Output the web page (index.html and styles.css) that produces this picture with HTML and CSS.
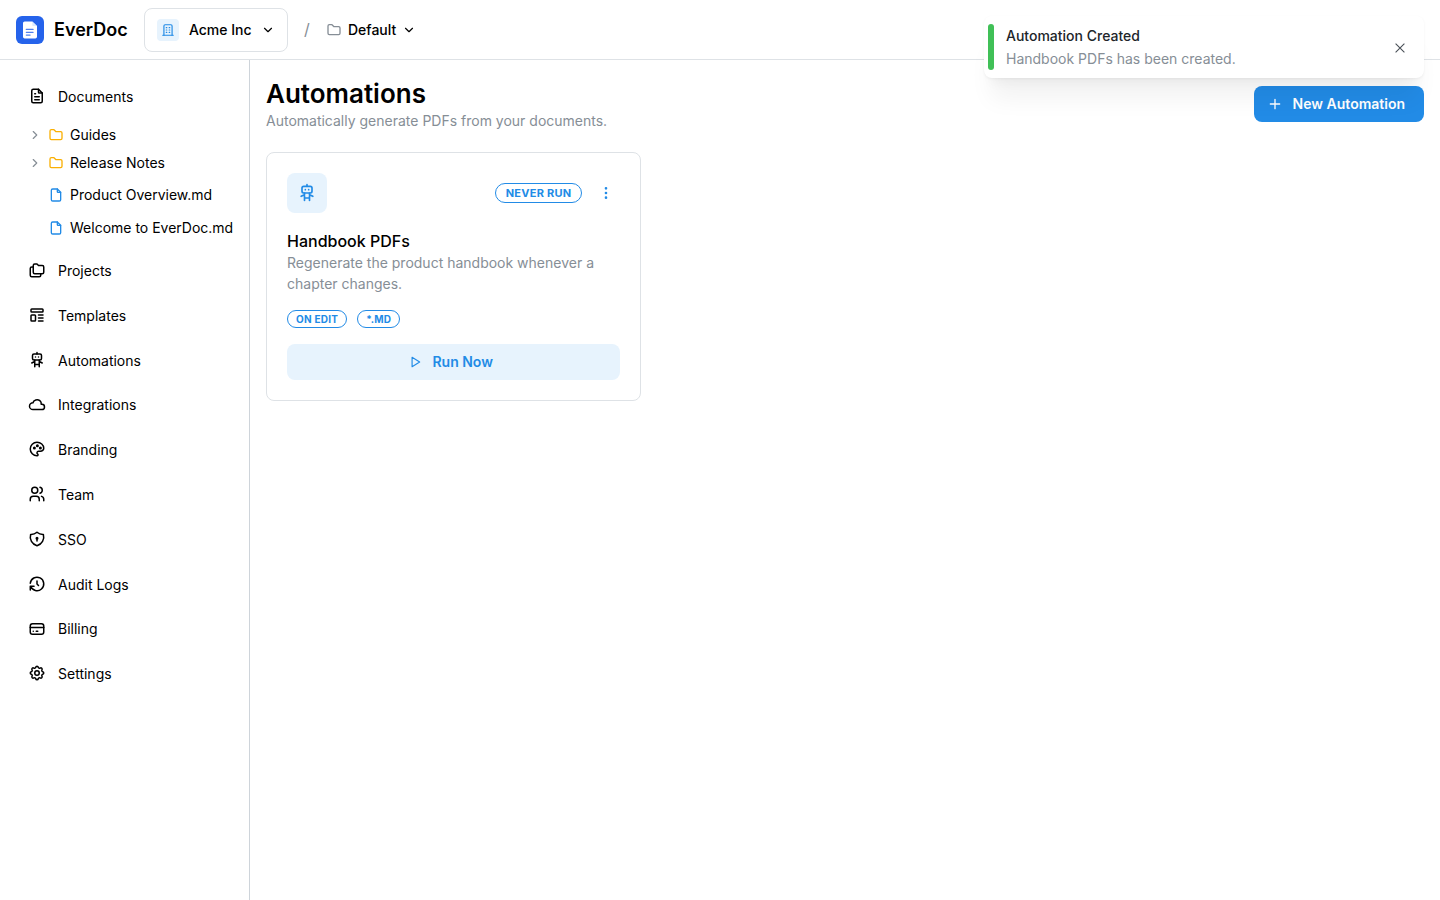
FILE: index.html
```html
<!DOCTYPE html>
<html lang="en">
<head>
<meta charset="utf-8">
<title>EverDoc</title>
<link rel="stylesheet" href="styles.css">
</head>
<body>
<svg class="defs" width="0" height="0">
  <symbol id="file-text" viewBox="0 0 24 24"><path d="M14 3v4a1 1 0 0 0 1 1h4"/><path d="M17 21h-10a2 2 0 0 1 -2 -2v-14a2 2 0 0 1 2 -2h7l5 5v11a2 2 0 0 1 -2 2z"/><path d="M9 9l1 0M9 13l6 0M9 17l6 0"/></symbol>
  <symbol id="file" viewBox="0 0 24 24"><path d="M14 3v4a1 1 0 0 0 1 1h4"/><path d="M17 21h-10a2 2 0 0 1 -2 -2v-14a2 2 0 0 1 2 -2h7l5 5v11a2 2 0 0 1 -2 2z"/></symbol>
  <symbol id="folder" viewBox="0 0 24 24"><path d="M5 4h4l3 3h7a2 2 0 0 1 2 2v8a2 2 0 0 1 -2 2h-14a2 2 0 0 1 -2 -2v-11a2 2 0 0 1 2 -2"/></symbol>
  <symbol id="folders" viewBox="0 0 24 24"><path d="M9 4h3l2 2h5a2 2 0 0 1 2 2v7a2 2 0 0 1 -2 2h-10a2 2 0 0 1 -2 -2v-9a2 2 0 0 1 2 -2"/><path d="M17 17v2a2 2 0 0 1 -2 2h-10a2 2 0 0 1 -2 -2v-9a2 2 0 0 1 2 -2h2"/></symbol>
  <symbol id="template" viewBox="0 0 24 24"><path d="M4 5a1 1 0 0 1 1 -1h14a1 1 0 0 1 1 1v2a1 1 0 0 1 -1 1h-14a1 1 0 0 1 -1 -1z"/><path d="M4 13a1 1 0 0 1 1 -1h4a1 1 0 0 1 1 1v6a1 1 0 0 1 -1 1h-4a1 1 0 0 1 -1 -1z"/><path d="M14 12l6 0M14 16l6 0M14 20l6 0"/></symbol>
  <symbol id="robot" viewBox="0 0 24 24"><path d="M6 6a2 2 0 0 1 2 -2h8a2 2 0 0 1 2 2v4a2 2 0 0 1 -2 2h-8a2 2 0 0 1 -2 -2z"/><path d="M12 2v2M9 12v9M15 12v9M5 16l4 -2M15 14l4 2M9 18h6M10 8v.01M14 8v.01"/></symbol>
  <symbol id="cloud" viewBox="0 0 24 24"><path d="M6.657 18c-2.572 0 -4.657 -2.007 -4.657 -4.483c0 -2.475 2.085 -4.482 4.657 -4.482c.393 -1.762 1.794 -3.2 3.675 -3.773c1.88 -.572 3.956 -.193 5.444 1c1.488 1.19 2.162 3.007 1.77 4.769h.99c1.913 0 3.464 1.56 3.464 3.486c0 1.927 -1.551 3.487 -3.465 3.487h-11.878"/></symbol>
  <symbol id="palette" viewBox="0 0 24 24"><path d="M12 21a9 9 0 0 1 0 -18c4.97 0 9 3.582 9 8c0 1.06 -.474 2.078 -1.318 2.828c-.844 .75 -1.989 1.172 -3.182 1.172h-2.5a2 2 0 0 0 -1 3.75a1.3 1.3 0 0 1 -1 2.25"/><circle cx="8.5" cy="10.5" r="1"/><circle cx="12.5" cy="7.5" r="1"/><circle cx="16.5" cy="10.5" r="1"/></symbol>
  <symbol id="users" viewBox="0 0 24 24"><circle cx="9" cy="7" r="4"/><path d="M3 21v-2a4 4 0 0 1 4 -4h4a4 4 0 0 1 4 4v2"/><path d="M16 3.13a4 4 0 0 1 0 7.75"/><path d="M21 21v-2a4 4 0 0 0 -3 -3.85"/></symbol>
  <symbol id="shield" viewBox="0 0 24 24"><path d="M12 3a12 12 0 0 0 8.5 3a12 12 0 0 1 -8.5 15a12 12 0 0 1 -8.5 -15a12 12 0 0 0 8.5 -3"/><circle cx="12" cy="11" r="1"/><path d="M12 12l0 2.5"/></symbol>
  <symbol id="history" viewBox="0 0 24 24"><path d="M12 8l0 4l2 2"/><path d="M3.05 11a9 9 0 1 1 .5 4m-.5 5v-5h5"/></symbol>
  <symbol id="card" viewBox="0 0 24 24"><path d="M3 8a3 3 0 0 1 3 -3h12a3 3 0 0 1 3 3v8a3 3 0 0 1 -3 3h-12a3 3 0 0 1 -3 -3z"/><path d="M3 10l18 0M7 15l.01 0M11 15l2 0"/></symbol>
  <symbol id="settings" viewBox="0 0 24 24"><path d="M10.325 4.317c.426 -1.756 2.924 -1.756 3.35 0a1.724 1.724 0 0 0 2.573 1.066c1.543 -.94 3.31 .826 2.37 2.37a1.724 1.724 0 0 0 1.065 2.572c1.756 .426 1.756 2.924 0 3.35a1.724 1.724 0 0 0 -1.066 2.573c.94 1.543 -.826 3.31 -2.37 2.37a1.724 1.724 0 0 0 -2.572 1.065c-.426 1.756 -2.924 1.756 -3.35 0a1.724 1.724 0 0 0 -2.573 -1.066c-1.543 .94 -3.31 -.826 -2.37 -2.37a1.724 1.724 0 0 0 -1.065 -2.572c-1.756 -.426 -1.756 -2.924 0 -3.35a1.724 1.724 0 0 0 1.066 -2.573c-.94 -1.543 .826 -3.31 2.37 -2.37c1 .608 2.296 .07 2.572 -1.065z"/><circle cx="12" cy="12" r="3"/></symbol>
  <symbol id="building" viewBox="0 0 24 24"><path d="M3 21l18 0M9 8l1 0M9 12l1 0M9 16l1 0M14 8l1 0M14 12l1 0M14 16l1 0"/><path d="M5 21v-16a2 2 0 0 1 2 -2h10a2 2 0 0 1 2 2v16"/></symbol>
  <symbol id="chevron-down" viewBox="0 0 24 24"><path d="M6 9l6 6l6 -6"/></symbol>
  <symbol id="chevron-right" viewBox="0 0 24 24"><path d="M9 6l6 6l-6 6"/></symbol>
  <symbol id="plus" viewBox="0 0 24 24"><path d="M12 5l0 14M5 12l14 0"/></symbol>
  <symbol id="play" viewBox="0 0 24 24"><path d="M7 4v16l13 -8z"/></symbol>
  <symbol id="dots" viewBox="0 0 24 24"><circle cx="12" cy="12" r="1"/><circle cx="12" cy="19" r="1"/><circle cx="12" cy="5" r="1"/></symbol>
</svg>

<header class="header">
  <div class="brand">
    <svg class="logo" viewBox="0 0 28 28"><rect width="28" height="28" rx="6" fill="#2563eb"/><path d="M8.7 5.4h7.6l4.7 4.7v10.7a1.7 1.7 0 0 1 -1.7 1.7h-10.6a1.7 1.7 0 0 1 -1.7 -1.7v-13.7a1.7 1.7 0 0 1 1.7 -1.7z" fill="#fff"/><path d="M16.3 5.4l4.7 4.7h-3.5a1.2 1.2 0 0 1 -1.2 -1.2z" fill="#dbeafe"/><path d="M10.3 13.4h6.8M10.3 16.3h6.8M10.3 19.1h3.8" stroke="#4f80ee" stroke-width="1.2" stroke-linecap="round"/></svg>
    <span class="brand-name">EverDoc</span>
  </div>
  <button class="org">
    <span class="org-icon"><svg class="icon s14"><use href="#building"/></svg></span>
    <span class="org-name">Acme Inc</span>
    <svg class="icon s14"><use href="#chevron-down"/></svg>
  </button>
  <span class="slash">/</span>
  <button class="workspace">
    <svg class="icon s16 gray"><use href="#folder"/></svg>
    <span>Default</span>
    <svg class="icon s14"><use href="#chevron-down"/></svg>
  </button>
</header>

<div class="shell">
  <nav class="sidebar">
    <a class="nav"><svg class="icon s18"><use href="#file-text"/></svg>Documents</a>
    <div class="tree">
      <a class="branch"><svg class="icon s14 gray"><use href="#chevron-right"/></svg><svg class="icon s16 yellow"><use href="#folder"/></svg>Guides</a>
      <a class="branch"><svg class="icon s14 gray"><use href="#chevron-right"/></svg><svg class="icon s16 yellow"><use href="#folder"/></svg>Release Notes</a>
      <div class="leaves">
        <a class="leaf"><svg class="icon s16 blue"><use href="#file"/></svg>Product Overview.md</a>
        <a class="leaf"><svg class="icon s16 blue"><use href="#file"/></svg>Welcome to EverDoc.md</a>
      </div>
    </div>
    <a class="nav"><svg class="icon s18"><use href="#folders"/></svg>Projects</a>
    <a class="nav"><svg class="icon s18"><use href="#template"/></svg>Templates</a>
    <a class="nav"><svg class="icon s18"><use href="#robot"/></svg>Automations</a>
    <a class="nav"><svg class="icon s18"><use href="#cloud"/></svg>Integrations</a>
    <a class="nav"><svg class="icon s18"><use href="#palette"/></svg>Branding</a>
    <a class="nav"><svg class="icon s18"><use href="#users"/></svg>Team</a>
    <a class="nav"><svg class="icon s18"><use href="#shield"/></svg>SSO</a>
    <a class="nav"><svg class="icon s18"><use href="#history"/></svg>Audit Logs</a>
    <a class="nav"><svg class="icon s18"><use href="#card"/></svg>Billing</a>
    <a class="nav"><svg class="icon s18"><use href="#settings"/></svg>Settings</a>
  </nav>

  <main class="main">
    <div class="page-head">
      <div>
        <h1 class="title">Automations</h1>
        <p class="subtitle">Automatically generate PDFs from your documents.</p>
      </div>
      <button class="primary"><svg class="icon s16"><use href="#plus"/></svg>New Automation</button>
    </div>
    <section class="card">
      <div class="card-top">
        <span class="card-icon"><svg class="icon s20"><use href="#robot"/></svg></span>
        <span class="badge">Never run</span>
        <button class="more"><svg class="icon s16"><use href="#dots"/></svg></button>
      </div>
      <h2 class="card-title">Handbook PDFs</h2>
      <p class="card-text">Regenerate the product handbook whenever a chapter changes.</p>
      <div class="tags"><span class="badge small">On edit</span><span class="badge small">*.md</span></div>
      <button class="run"><svg class="icon s14"><use href="#play"/></svg>Run Now</button>
    </section>
  </main>
</div>

<div class="toast">
  <span class="toast-bar"></span>
  <div class="toast-body">
    <div class="toast-title">Automation Created</div>
    <div class="toast-text">Handbook PDFs has been created.</div>
  </div>
  <svg class="toast-close" viewBox="0 0 10 10"><path d="M0.6 0.6l8.8 8.8M9.4 0.6l-8.8 8.8"/></svg>
</div>
</body>
</html>
```
FILE: styles.css
```css
* { box-sizing: border-box; }
body {
  margin: 0;
  height: 900px;
  overflow: hidden;
  background: #fff;
  color: #000;
  font-family: Inter, "Liberation Sans", sans-serif;
  font-size: 14px;
  line-height: 21.7px;
  -webkit-font-smoothing: antialiased;
}
button { font: inherit; color: inherit; background: none; border: 0; padding: 0; margin: 0; }
h1, h2, p { margin: 0; }
.defs { position: absolute; }

.icon { flex: none; fill: none; stroke: currentColor; stroke-width: 2; stroke-linecap: round; stroke-linejoin: round; }
.s14 { width: 14px; height: 14px; }
.s16 { width: 16px; height: 16px; }
.s18 { width: 18px; height: 18px; }
.s20 { width: 20px; height: 20px; }
.gray { color: #868e96; }
.yellow { color: #fab005; }
.blue { color: #228be6; }

.header {
  display: flex;
  align-items: center;
  height: 60px;
  padding: 0 16px;
  border-bottom: 1px solid #dee2e6;
}
.brand { display: flex; align-items: center; gap: 10px; width: 127.5px; }
.logo { width: 28px; height: 28px; }
.brand-name { font-size: 18px; font-weight: 600; line-height: 28px; }
.org {
  display: flex;
  align-items: center;
  width: 144.5px;
  height: 44px;
  padding: 0 12px;
  border: 1px solid #dee2e6;
  border-radius: 8px;
  font-weight: 500;
}
.org-icon {
  display: grid;
  place-items: center;
  width: 22px;
  height: 22px;
  margin-right: 10.4px;
  border-radius: 4px;
  background: #e7f3fd;
  color: #228be6;
}
.org-name { margin-right: auto; }
.slash { width: 38px; text-align: center; font-size: 16px; color: #868e96; }
.workspace { display: flex; align-items: center; gap: 6px; font-weight: 500; }
.workspace .icon { margin-top: 1px; }

.shell { display: flex; height: 840px; }
.sidebar { flex: none; width: 250px; padding: 14px 16px; border-right: 1px solid #ced4da; }
.nav { display: flex; align-items: center; gap: 12px; height: 44.8px; padding: 0 12px; }
.nav .icon { margin-bottom: 1.4px; }
.tree { padding: 2.4px 0 4.25px 12px; }
.branch, .leaf { display: flex; align-items: center; gap: 6px; white-space: nowrap; }
.branch { height: 28px; }
.leaves { padding: 0.9px 0 0 20px; }
.leaf { height: 33.1px; }

.main { flex: 1; padding: 16px; }
.page-head { display: flex; justify-content: space-between; align-items: center; margin-bottom: 20px; }
.title { font-size: 26px; font-weight: 600; line-height: 35px; }
.subtitle { margin: -1.4px 0 0.9px; color: #868e96; line-height: 21px; }
.primary {
  display: flex;
  align-items: center;
  gap: 10px;
  height: 36px;
  padding: 0 19px 0 13px;
  border-radius: 8px;
  background: #228be6;
  color: #fff;
  font-weight: 600;
}
.card {
  width: 375.4px;
  height: 249.5px;
  padding: 20px;
  border: 1px solid #dee2e6;
  border-radius: 8px;
}
.card-top { display: flex; align-items: center; height: 40px; margin-bottom: 16.4px; }
.card-icon {
  display: grid;
  place-items: center;
  width: 40px;
  height: 40px;
  margin-right: auto;
  border-radius: 8px;
  background: #e7f3fd;
  color: #228be6;
}
.badge {
  display: flex;
  align-items: center;
  height: 20px;
  padding: 2px 10px 0;
  border: 1px solid #228be6;
  border-radius: 20px;
  color: #228be6;
  font-size: 11px;
  font-weight: 700;
  letter-spacing: 0.25px;
  text-transform: uppercase;
}
.more { display: grid; place-items: center; width: 28px; height: 28px; margin-left: 10px; color: #228be6; }
.card-title { font-size: 16px; font-weight: 500; line-height: 24px; }
.card-text { margin-top: -1px; color: #868e96; line-height: 21px; }
.tags { display: flex; gap: 10px; margin: 16.2px 0 16px; }
.badge.small { height: 18px; padding: 1.4px 8px 0; font-size: 10px; }
.run {
  display: flex;
  align-items: center;
  justify-content: center;
  gap: 10px;
  width: 100%;
  height: 36px;
  padding-right: 6px;
  border-radius: 8px;
  background: #e7f3fd;
  color: #228be6;
  font-weight: 600;
}

.toast {
  position: absolute;
  top: 16px;
  right: 16px;
  display: flex;
  align-items: center;
  width: 440px;
  height: 62.4px;
  padding: 8px 19px 8px 4px;
  border-radius: 8px;
  background: #fff;
  box-shadow: 0 1px 3px rgba(0,0,0,.05), 0 28px 23px -7px rgba(0,0,0,.05), 0 12px 12px -7px rgba(0,0,0,.04);
}
.toast-bar { align-self: stretch; width: 6px; margin-right: 12px; border-radius: 8px; background: #40c057; }
.toast-body { flex: 1; padding-top: 0.2px; }
.toast-title { margin-bottom: 2px; font-weight: 500; color: #212529; }
.toast-text { color: #868e96; }
.toast-close { width: 10px; height: 10px; margin-top: 1px; fill: none; stroke: #495057; stroke-width: 1.1; }
```
